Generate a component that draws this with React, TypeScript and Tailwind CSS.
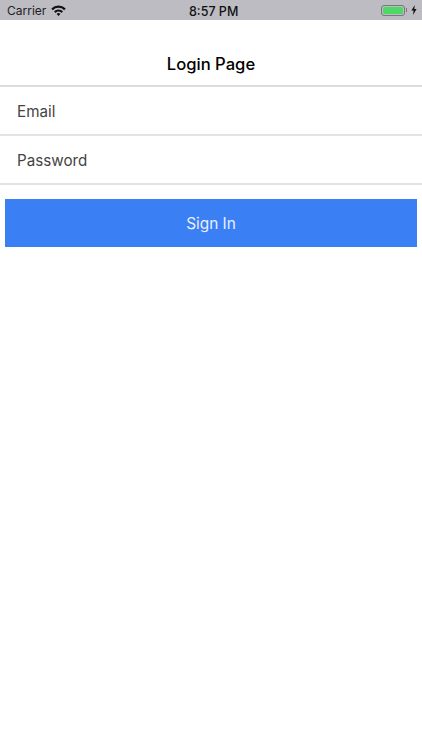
export default function App() {
  return (
    <div className="min-h-[750px] bg-white font-['Inter','Liberation_Sans',sans-serif]">
      {/* status bar */}
      <div className="relative flex h-[20px] items-center justify-between bg-[#bdbcc3] pl-[7px] pr-[5px] text-[12px] text-[#111]">
        <div className="flex items-center gap-[5px]">
          <span className="pt-[1px] text-[#222]">Carrier</span>
          <svg width="15" height="11" viewBox="0 0 15 11">
            <path d="M0.3 3.6 A10.2 10.2 0 0 1 14.7 3.6 L13.2 5.2 A8.1 8.1 0 0 0 1.8 5.2 Z" fill="#111" />
            <path d="M3 6.3 A6.4 6.4 0 0 1 12 6.3 L10.5 7.9 A4.3 4.3 0 0 0 4.5 7.9 Z" fill="#111" />
            <path d="M5.6 8.9 A2.7 2.7 0 0 1 9.4 8.9 L7.5 10.9 Z" fill="#111" />
          </svg>
        </div>
        <span className="absolute left-[189px] top-[2px] text-[12.5px] font-medium leading-[20px] text-[#111]">8:57 PM</span>
        <div className="flex items-center gap-[3px]">
          <div className="flex items-center">
            <div className="flex h-[11px] w-[24px] items-center rounded-[3px] border border-[#77777c] p-[1px]">
              <div className="h-full w-full rounded-[1.5px] bg-[#4cd964]" />
            </div>
            <div className="ml-[1px] h-[4px] w-[1px] bg-[#77777c]" />
          </div>
          <svg width="6" height="10" viewBox="0 0 6 10" className="ml-[1px]">
            <path d="M3.8 0 L0.4 5.6 H2.6 L2 10 L5.6 4 H3.3 Z" fill="#111" />
          </svg>
        </div>
      </div>

      {/* nav bar */}
      <div className="flex h-[67px] items-end justify-center border-b-2 border-[#dcdcdc] pb-[9px] text-[16.6px] font-medium leading-[24px] text-black">
        Login Page
      </div>

      {/* fields */}
      <div className="flex h-[49px] items-center border-b-2 border-[#e3e3e3] pl-[17px] pt-[4px] text-[15.2px] text-[#444]">Email</div>
      <div className="flex h-[49px] items-center border-b-2 border-[#e3e3e3] pl-[17px] pt-[4px] text-[15.2px] text-[#444]">Password</div>

      {/* button */}
      <div className="mx-[5px] mt-[14px] flex h-[48px] items-center justify-center bg-[#3b7ff5] pt-[2px] text-[15.4px] text-[#e8f0fe]">
        Sign In
      </div>
    </div>
  );
}
